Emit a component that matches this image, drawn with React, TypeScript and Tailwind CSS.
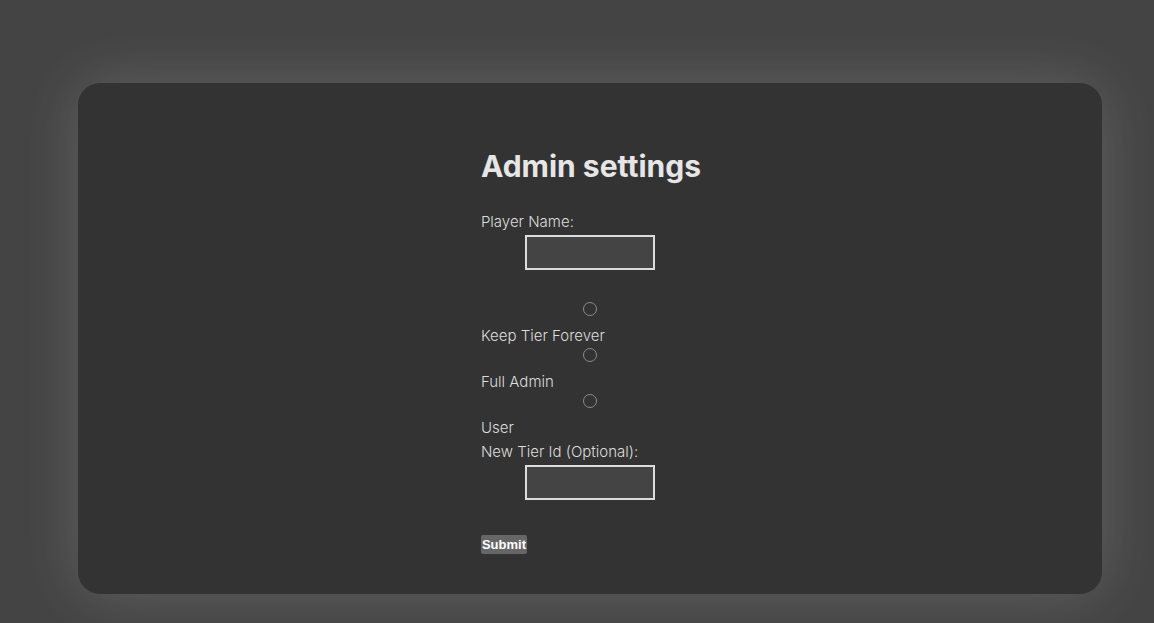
import { useState } from "react";

const ROLES = ["Keep Tier Forever", "Full Admin", "User"];

export default function App() {
  const [playerName, setPlayerName] = useState("");
  const [tierId, setTierId] = useState("");
  const [role, setRole] = useState("");

  return (
    <div className="min-h-[623px] bg-[#444444] pt-[83px] pb-[29px] font-['Inter',sans-serif]">
      <div className="ml-[78px] w-[1024px] rounded-[22px] bg-[#333333] pt-[65px] pb-[40px] shadow-[0_0_60px_rgba(255,255,255,0.16)]">
        <form
          onSubmit={(e) => e.preventDefault()}
          className="mx-auto flex w-fit flex-col text-[15px] font-light leading-[24px] text-[#dddddd]"
        >
          {/* Heading */}
          <h1 className="translate-x-px text-[30px] font-bold leading-[36px] text-[#e6e6e6]">
            Admin settings
          </h1>

          {/* Player name */}
          <label className="mt-[26px] translate-x-px">Player Name:</label>
          <input
            value={playerName}
            onChange={(e) => setPlayerName(e.target.value)}
            className="mx-auto mt-[1px] h-[35px] w-[130px] border-2 border-[#dcdcdc] bg-[#444444] px-1 text-[#eeeeee] outline-none"
          />

          {/* Role radios */}
          <div className="mt-[32px] flex flex-col">
            {ROLES.map((r) => (
              <div key={r} className="flex flex-col">
                <div className="flex h-[22px] justify-center">
                  <input
                    type="radio"
                    name="role"
                    checked={role === r}
                    onChange={() => setRole(r)}
                    className="h-[14px] w-[14px] appearance-none rounded-full border border-[#8a8a8a] bg-transparent checked:bg-[#8a8a8a]"
                  />
                </div>
                <span className="translate-x-px">{r}</span>
              </div>
            ))}
          </div>

          {/* Tier id */}
          <label className="translate-x-px">New Tier Id (Optional):</label>
          <input
            value={tierId}
            onChange={(e) => setTierId(e.target.value)}
            className="mx-auto mt-[1px] h-[35px] w-[130px] border-2 border-[#dcdcdc] bg-[#444444] px-1 text-[#eeeeee] outline-none"
          />

          <div className="mt-[35px] flex translate-x-px">
            <button
              type="submit"
              className="h-[19px] rounded-[2px] bg-[#666666] px-px font-['Liberation_Sans',sans-serif] text-[13px] leading-[19px] font-bold text-white"
            >
              Submit
            </button>
          </div>
        </form>
      </div>
    </div>
  );
}
